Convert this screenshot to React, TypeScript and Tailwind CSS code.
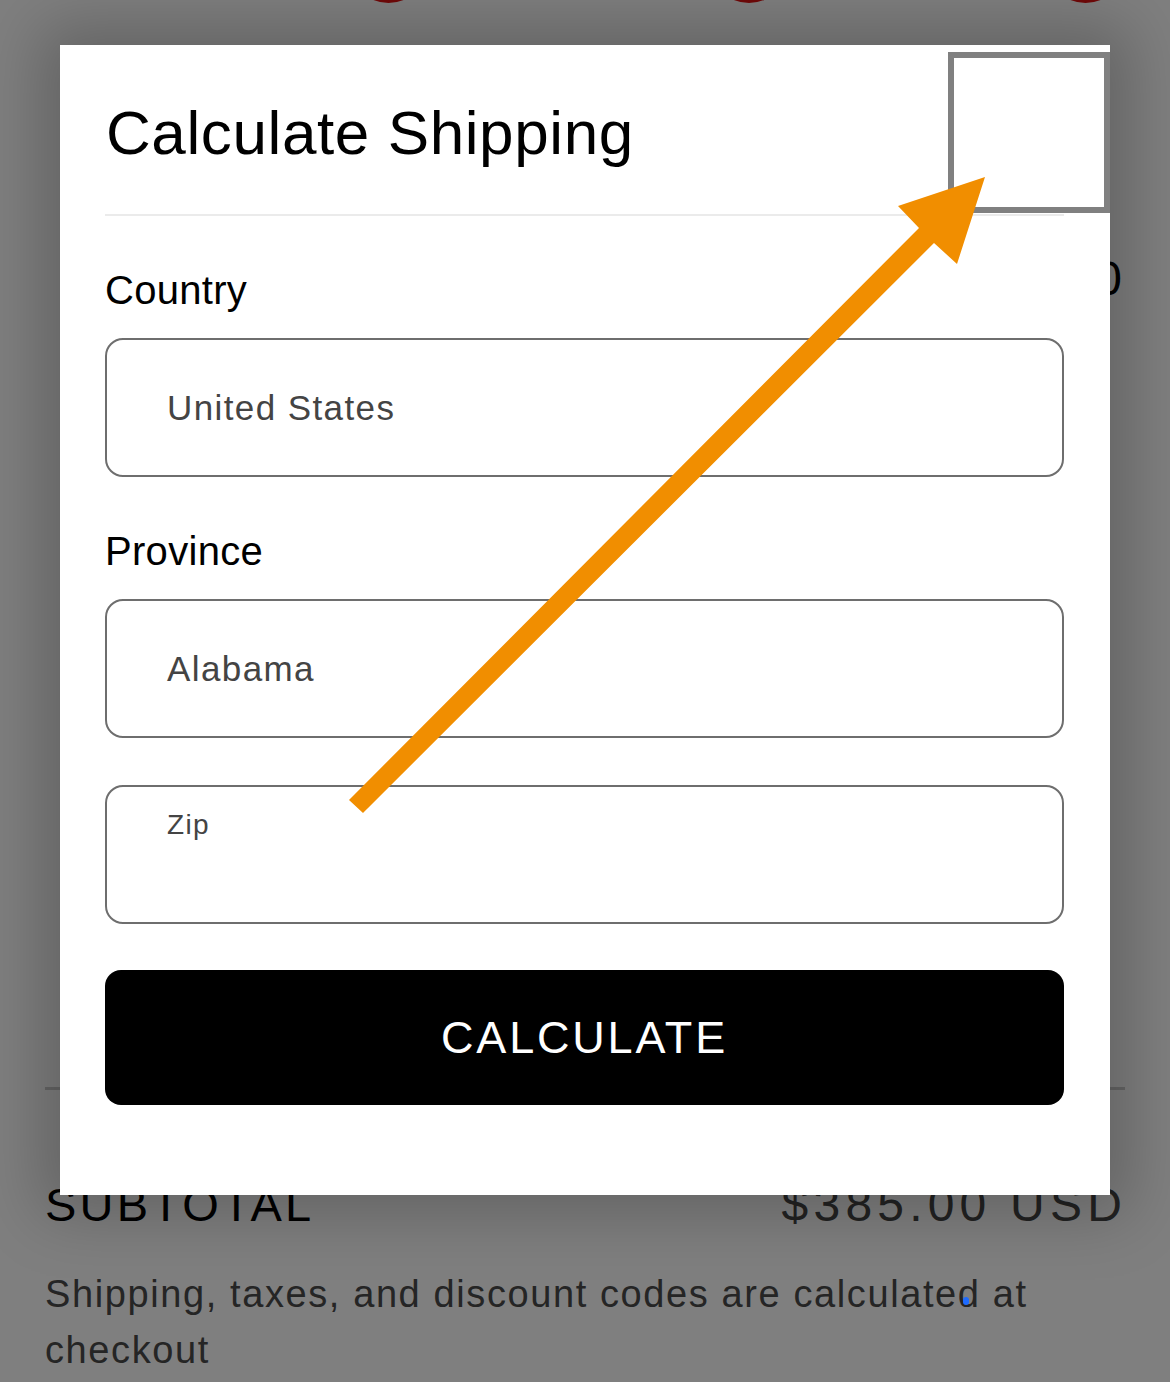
import React from 'react'

const font = { fontFamily: '"Liberation Sans", Arial, Helvetica, sans-serif' }

function Field({ value }: { value: string }) {
  return (
    <div className="mt-[24px] h-[139px] rounded-[18px] border-2 border-[#6e6e6e] flex items-center pl-[60px]">
      <span className="text-[35px] leading-[40px] tracking-[1.4px] text-[#444444]">{value}</span>
    </div>
  )
}

function Label({ children }: { children: React.ReactNode }) {
  return <div className="mt-[50px] text-[40px] leading-[48px] tracking-[0.3px] text-black">{children}</div>
}

export default function App() {
  return (
    <div className="relative w-[1170px] h-[1382px] overflow-hidden bg-white" style={font}>
      {/* page behind the dialog */}
      <div className="flex flex-col px-[45px]">
        <div className="flex -mt-[77px] h-[80px]">
          <div className="ml-[304px] w-[80px] h-[80px] rounded-full bg-[#e01212]" />
          <div className="ml-[281px] w-[80px] h-[80px] rounded-full bg-[#e01212]" />
          <div className="ml-[257px] w-[80px] h-[80px] rounded-full bg-[#e01212]" />
        </div>
        <div className="mt-[248px] h-[56px] flex justify-end text-[48px] leading-[56px] text-black pr-[3px]">$385.00</div>
        <div className="mt-[780px] h-[3px] bg-[#cccccc]" />
        <div className="mt-[87px] h-[56px] flex justify-between items-center">
          <span className="text-[47px] leading-[56px] tracking-[3.2px] text-black">SUBTOTAL</span>
          <span className="text-[48px] leading-[56px] tracking-[5.2px] text-[#444444] -mr-[2px]">$385.00 USD</span>
        </div>
        <p className="mt-[33px] w-[1010px] text-[38px] leading-[56px] tracking-[1.6px] text-[#4a4a4a]">
          Shipping, taxes, and discount codes are calculated at checkout
        </p>
      </div>

      {/* overlay */}
      <div className="absolute inset-0 bg-black/50" />

      {/* dialog */}
      <div className="absolute left-[60px] top-[45px] w-[1050px] h-[1150px] bg-white shadow-[0_0_60px_20px_rgba(0,0,0,0.22)] flex flex-col pl-[45px] pr-[46px]">
        <h2 className="mt-[52px] pl-px text-[62px] leading-[72px] tracking-[0.6px] text-black font-normal">Calculate Shipping</h2>
        <button className="absolute right-0 top-[7px] w-[162px] h-[161px] border-[6px] border-[#808080] bg-white" aria-label="Close" />
        <div className="mt-[45px] h-[2px] bg-[#ebebeb]" />

        <Label>Country</Label>
        <Field value="United States" />

        <Label>Province</Label>
        <Field value="Alabama" />

        <div className="mt-[47px] h-[139px] rounded-[18px] border-2 border-[#6e6e6e] pl-[60px] pt-[21px]">
          <span className="text-[28px] leading-[34px] tracking-[1.4px] text-[#444444]">Zip</span>
        </div>

        <button className="mt-[46px] h-[135px] rounded-[16px] bg-black text-white text-[45px] tracking-[2.8px] flex items-center justify-center">
          CALCULATE
        </button>
      </div>

      {/* touch dot */}
      <div className="absolute left-[963px] top-[1297px] w-[6px] h-[8px] rounded-full bg-[#1e6bff]" />

      {/* annotation arrow */}
      <svg className="absolute inset-0 pointer-events-none" width="1170" height="1382" viewBox="0 0 1170 1382">
        <polygon points="349,800 919,228 898,206 985,177 957,264 934,243 363,813" fill="#f18e00" />
      </svg>
    </div>
  )
}
